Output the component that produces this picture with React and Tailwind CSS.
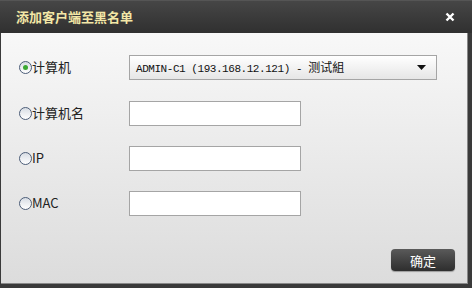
import React from "react";

function Radio({ checked }) {
  return (
    <span className="relative inline-flex w-[13px] h-[13px] rounded-full border border-[#4c5d78] bg-gradient-to-b from-[#d8dde4] to-[#ffffff] items-center justify-center shrink-0">
      {checked && (
        <span className="w-[5px] h-[5px] rounded-full bg-[#3aa832]" />
      )}
    </span>
  );
}

function Row({ checked, label, children, mt }) {
  return (
    <div className={`flex items-center h-[25px] ${mt}`}>
      <div className="flex items-center w-[110px] pl-[18px]">
        <Radio checked={checked} />
        <span className="text-[13px] text-[#222] leading-none -mt-[2px]">{label}</span>
      </div>
      {children}
    </div>
  );
}

export default function App() {
  return (
    <div
      className="w-[472px] h-[288px] bg-[#3a3a3a] flex flex-col"
      style={{ fontFamily: '"Noto Sans CJK SC", "Liberation Sans", sans-serif' }}
    >
      <div className="h-[33px] shrink-0 flex items-center justify-between pl-[16px] pr-[17px] bg-gradient-to-b from-[#464646] to-[#303030] border-t border-[#555]">
        <span className="text-[13px] font-bold text-[#f3e7a6] leading-none -mt-[2px]">添加客户端至黑名单</span>
        <svg width="10" height="10" viewBox="0 0 10 10">
          <path d="M1.5 1.5 L8.5 8.5 M8.5 1.5 L1.5 8.5" stroke="#fff" strokeWidth="2.4" />
        </svg>
      </div>
      <div className="flex-1 ml-[1px] mr-[4px] mb-[4px] bg-gradient-to-b from-[#f8f8f8] to-[#dcdcdc] border-r border-b border-[#888] flex flex-col">
        <Row checked label="计算机" mt="mt-[22px]">
          <div className="ml-[18px] w-[308px] h-[25px] border border-[#a5a5a5] bg-gradient-to-b from-[#ffffff] to-[#e6e6e6] flex items-center justify-between pl-[6px] pr-[10px]">
            <span
              className="text-[11px] text-[#111] tracking-[-0.45px]"
              style={{ fontFamily: '"Liberation Mono", "Noto Sans CJK SC", monospace' }}
            >
              ADMIN-C1 (193.168.12.121) - <span style={{ fontFamily: '"Noto Sans CJK SC", sans-serif' }} className="text-[12px] tracking-normal">测试組</span>
            </span>
            <svg width="9" height="5" viewBox="0 0 9 5">
              <path d="M0 0 L9 0 L4.5 5 Z" fill="#111" />
            </svg>
          </div>
        </Row>
        <Row label="计算机名" mt="mt-[21px]">
          <div className="ml-[18px] w-[172px] h-[25px] border border-[#a5a5a5] bg-white" />
        </Row>
        <Row label="IP" mt="mt-[20px]">
          <div className="ml-[18px] w-[172px] h-[25px] border border-[#a5a5a5] bg-white" />
        </Row>
        <Row label="MAC" mt="mt-[20px]">
          <div className="ml-[18px] w-[172px] h-[25px] border border-[#a5a5a5] bg-white" />
        </Row>
        <div className="flex justify-end mt-[33px] pr-[12px]">
          <button className="w-[64px] h-[22px] rounded-[4px] bg-gradient-to-b from-[#5a5a5a] to-[#2e2e2e] text-white text-[13px] leading-none flex items-center justify-center shadow-[0_1px_1px_rgba(0,0,0,0.3)]">
            确定
          </button>
        </div>
      </div>
    </div>
  );
}
